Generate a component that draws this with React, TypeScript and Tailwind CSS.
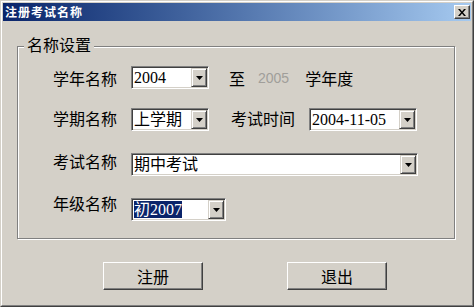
import type { ReactNode } from 'react';

const cjk = '"Noto Sans CJK SC", "Noto Sans", sans-serif';
const serifMix = '"Liberation Serif", "Noto Sans CJK SC", serif';

const Arrow = () => (
    <svg width="7" height="4" viewBox="0 0 7 4" className="block">
        <polygon points="0,0 7,0 3.5,4" fill="#000" />
    </svg>
);

interface ComboProps {
    width: string;
    children: ReactNode;
    selected?: boolean;
}

const Combo = ({ width, children, selected }: ComboProps) => (
    <div
        className={`${width} h-[23px] shrink-0 flex border border-t-[#808080] border-l-[#808080] border-r-white border-b-white shadow-[inset_1px_1px_0_#404040,inset_-1px_-1px_0_#d4d0c8] p-px`}
    >
        <div className="flex-1 bg-white flex items-center pl-px overflow-hidden">
            <span
                className={`text-[16px] leading-[17px] whitespace-nowrap ${selected ? 'bg-[#0a246a] text-white' : 'text-black'}`}
                style={{ fontFamily: serifMix }}
            >
                {children}
            </span>
        </div>
        <div className="w-[16px] h-full flex items-center justify-center bg-[#d4d0c8] border border-t-[#d4d0c8] border-l-[#d4d0c8] border-r-[#404040] border-b-[#404040] shadow-[inset_1px_1px_0_#fff,inset_-1px_-1px_0_#808080]">
            <Arrow />
        </div>
    </div>
);

const Label = ({ children, className = '' }: { children: ReactNode; className?: string }) => (
    <span className={`text-[16px] leading-4 text-black whitespace-nowrap ${className}`} style={{ fontFamily: cjk }}>
        {children}
    </span>
);

const Button = ({ children }: { children: ReactNode }) => (
    <button className="w-[100px] h-[28px] flex items-center justify-center bg-[#d4d0c8] border border-t-white border-l-white border-r-[#404040] border-b-[#404040] shadow-[inset_-1px_-1px_0_#808080]">
        <span className="text-[16px] leading-4 text-black" style={{ fontFamily: cjk }}>
            {children}
        </span>
    </button>
);

export default function App() {
    return (
        <div className="w-[474px] h-[307px] bg-[#d4d0c8] border border-t-[#d4d0c8] border-l-[#d4d0c8] border-r-[#404040] border-b-[#404040]">
            <div className="h-full flex flex-col border border-t-white border-l-white border-r-[#808080] border-b-[#808080] p-px">
                {/* title bar */}
                <div className="h-[18px] shrink-0 flex items-center justify-between bg-gradient-to-r from-[#0a246a] to-[#a6caf0]">
                    <span
                        className="pl-[2px] text-[12px] leading-3 font-bold tracking-[1px] text-white"
                        style={{ fontFamily: cjk }}
                    >
                        注册考试名称
                    </span>
                    <div className="mr-[1px] w-[16px] h-[14px] flex items-center justify-center bg-[#d4d0c8] border border-t-white border-l-white border-r-[#404040] border-b-[#404040] shadow-[inset_-1px_-1px_0_#808080]">
                        <svg width="8" height="7" viewBox="0 0 8 7" className="block">
                            <path d="M0 0h2l2 2.5L6 0h2L5 3.5 8 7H6L4 4.5 2 7H0l3-3.5z" fill="#000" />
                        </svg>
                    </div>
                </div>

                {/* group box */}
                <div className="relative mt-[25px] ml-[14px] w-[438px] h-[193px] border border-[#808080] shadow-[1px_1px_0_#fff,inset_1px_1px_0_#fff]">
                    <span
                        className="absolute -top-[11px] left-[6px] px-[3px] bg-[#d4d0c8] text-[16px] leading-4 text-black"
                        style={{ fontFamily: cjk }}
                    >
                        名称设置
                    </span>

                    <div className="flex flex-col pl-[35px] pt-[19px]">
                        <div className="flex items-start">
                            <Label className="w-[78px] mt-[4px]">学年名称</Label>
                            <Combo width="w-[78px]">2004</Combo>
                            <Label className="ml-[20px] mt-[4px]">至</Label>
                            <span
                                className="ml-[13px] mt-[4px] text-[14px] leading-4 text-[#a09e9a]"
                                style={{ fontFamily: '"Liberation Sans", sans-serif' }}
                            >
                                2005
                            </span>
                            <Label className="ml-[16px] mt-[4px]">学年度</Label>
                        </div>

                        <div className="flex items-start mt-[19px]">
                            <Label className="w-[78px] mt-[2px]">学期名称</Label>
                            <Combo width="w-[78px]">上学期</Combo>
                            <Label className="ml-[22px] mt-[2px]">考试时间</Label>
                            <div className="ml-[14px]">
                                <Combo width="w-[108px]">2004-11-05</Combo>
                            </div>
                        </div>

                        <div className="flex items-start mt-[22px]">
                            <Label className="w-[78px] mt-0">考试名称</Label>
                            <Combo width="w-[287px]">期中考试</Combo>
                        </div>

                        <div className="flex items-start mt-[22px]">
                            <Label className="w-[78px] -mt-[3px]">年级名称</Label>
                            <Combo width="w-[95px]" selected>
                                初2007
                            </Combo>
                        </div>
                    </div>
                </div>

                {/* buttons */}
                <div className="flex mt-[23px] ml-[100px] gap-[84px]">
                    <Button>注册</Button>
                    <Button>退出</Button>
                </div>
            </div>
        </div>
    );
}
